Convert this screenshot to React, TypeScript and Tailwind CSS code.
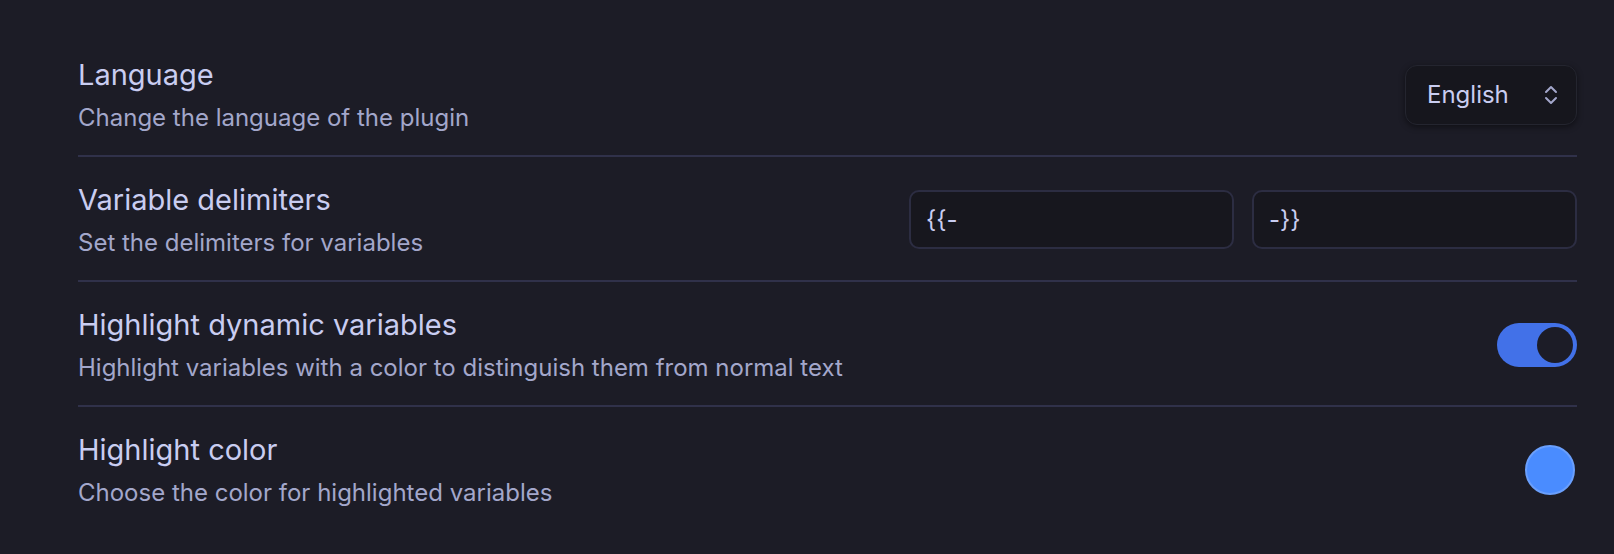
import { useState } from "react";

function SettingInfo({ name, desc }: { name: string; desc: string }) {
  return (
    <div className="flex flex-col gap-[9px] min-w-0">
      <div className="text-[29px] leading-[38px] text-[#c9cdf1]">{name}</div>
      <div className="text-[24px] leading-[30px] text-[#a3a7cb]">{desc}</div>
    </div>
  );
}

function Toggle({ on, onChange }: { on: boolean; onChange: () => void }) {
  return (
    <button
      onClick={onChange}
      className={`w-[80px] h-[44px] rounded-full p-[4px] flex ${on ? "bg-[#4271e8] justify-end" : "bg-[#3a3b52] justify-start"}`}
    >
      <span className="w-[36px] h-[36px] rounded-full bg-[#1c1c27]" />
    </button>
  );
}

export default function App() {
  const [highlight, setHighlight] = useState(true);

  return (
    <div
      className="w-[1614px] h-[554px] bg-[#1c1c26] pl-[78px] pr-[37px] pt-[32px]"
      style={{ fontFamily: "Inter, 'Noto Sans', sans-serif" }}
    >
      {/* Language */}
      <div className="flex items-center justify-between pt-[24px] pb-[22px]">
        <SettingInfo name="Language" desc="Change the language of the plugin" />
        <div className="relative w-[172px] h-[60px] rounded-[12px] bg-[#16161d] border border-[#24252f] shadow-[0_2px_6px_rgba(0,0,0,0.45)] flex items-center pl-[21px]">
          <span className="text-[24px] text-[#c9cdf1]">English</span>
          <svg
            className="absolute right-[16px] top-1/2 -translate-y-1/2"
            width="18"
            height="22"
            viewBox="0 0 18 22"
            fill="none"
            stroke="#a3a7cb"
            strokeWidth="2"
            strokeLinecap="round"
            strokeLinejoin="round"
          >
            <path d="M4 8l5-5 5 5" />
            <path d="M4 14l5 5 5-5" />
          </svg>
        </div>
      </div>

      {/* Variable delimiters */}
      <div className="flex items-center justify-between border-t-2 border-[#30314a] pt-[24px] pb-[22px]">
        <SettingInfo name="Variable delimiters" desc="Set the delimiters for variables" />
        <div className="flex gap-[18px]">
          <input
            defaultValue="{{-"
            className="w-[325px] h-[59px] rounded-[10px] bg-[#17171e] border-2 border-[#2c2d42] px-[15px] text-[24px] text-[#c9cdf1] outline-none"
          />
          <input
            defaultValue="-}}"
            className="w-[325px] h-[59px] rounded-[10px] bg-[#17171e] border-2 border-[#2c2d42] px-[15px] text-[24px] text-[#c9cdf1] outline-none"
          />
        </div>
      </div>

      {/* Highlight dynamic variables */}
      <div className="flex items-center justify-between border-t-2 border-[#30314a] pt-[24px] pb-[22px]">
        <SettingInfo
          name="Highlight dynamic variables"
          desc="Highlight variables with a color to distinguish them from normal text"
        />
        <Toggle on={highlight} onChange={() => setHighlight(!highlight)} />
      </div>

      {/* Highlight color */}
      <div className="flex items-center justify-between border-t-2 border-[#30314a] pt-[24px] pb-[22px]">
        <SettingInfo name="Highlight color" desc="Choose the color for highlighted variables" />
        <div className="w-[50px] h-[50px] rounded-full bg-[#4a8cff] border-2 border-[#6a9ffc] mr-[2px]" />
      </div>
    </div>
  );
}
